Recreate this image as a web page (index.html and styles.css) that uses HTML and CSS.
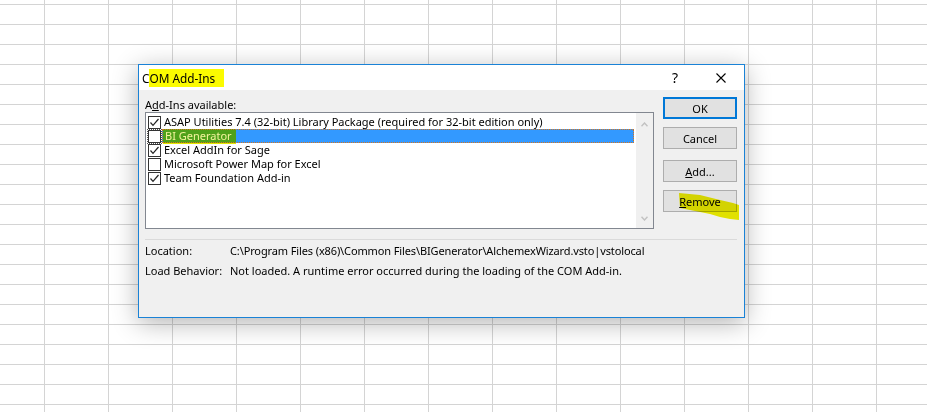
FILE: index.html
```html
<!DOCTYPE html>
<html>
<head>
<meta charset="utf-8">
<title>COM Add-Ins</title>
<link rel="stylesheet" href="styles.css">
</head>
<body>
<div class="dialog">
  <div class="titlebar">
    <span class="title">C<span class="hl">OM Add-Ins</span></span>
    <div class="tb-btns">
      <span class="tbtn help">?</span>
      <span class="tbtn close"><svg width="10" height="10" viewBox="0 0 10 10"><path d="M0.5 0.5 L9.5 9.5 M9.5 0.5 L0.5 9.5" stroke="#000" stroke-width="1.1" fill="none"/></svg></span>
    </div>
  </div>
  <div class="content">
    <div class="main">
      <div class="left">
        <div class="lbl">A<u>d</u>d-Ins available:</div>
        <div class="listbox">
          <ul class="items">
            <li class="item"><span class="cb"><svg width="11" height="11" viewBox="0 0 11 11"><polyline points="1.5,5.5 4,8.3 9.5,2" fill="none" stroke="#222" stroke-width="1.2"/></svg></span><span class="txt">ASAP Utilities 7.4 (32-bit) Library Package (required for 32-bit edition only)</span></li>
            <li class="item sel"><span class="cb focus"></span><span class="txt"><span class="hl2">BI Generator</span></span></li>
            <li class="item"><span class="cb"><svg width="11" height="11" viewBox="0 0 11 11"><polyline points="1.5,5.5 4,8.3 9.5,2" fill="none" stroke="#222" stroke-width="1.2"/></svg></span><span class="txt">Excel AddIn for Sage</span></li>
            <li class="item"><span class="cb"></span><span class="txt">Microsoft Power Map for Excel</span></li>
            <li class="item"><span class="cb"><svg width="11" height="11" viewBox="0 0 11 11"><polyline points="1.5,5.5 4,8.3 9.5,2" fill="none" stroke="#222" stroke-width="1.2"/></svg></span><span class="txt">Team Foundation Add-in</span></li>
          </ul>
          <div class="sb">
            <svg width="7" height="5" viewBox="0 0 7 5"><polyline points="0.5,4.3 3.5,1 6.5,4.3" fill="none" stroke="#c2c2c2" stroke-width="1.4"/></svg>
            <svg width="7" height="5" viewBox="0 0 7 5"><polyline points="0.5,0.7 3.5,4 6.5,0.7" fill="none" stroke="#c2c2c2" stroke-width="1.4"/></svg>
          </div>
        </div>
      </div>
      <div class="buttons">
        <div class="btn ok">OK</div>
        <div class="btn cancel">Cancel</div>
        <div class="btn add"><u>A</u>dd...</div>
        <div class="btn remove"><u>R</u>emove</div>
      </div>
    </div>
    <div class="sep"></div>
    <div class="info">
      <span>Location:</span><span class="path">C:\Program Files (x86)\Common Files\BIGenerator\AlchemexWizard.vsto|vstolocal</span>
      <span>Load Behavior:</span><span>Not loaded. A runtime error occurred during the loading of the COM Add-in.</span>
    </div>
  </div>
  <svg class="scribble" width="60" height="28" viewBox="0 0 60 28"><polygon points="0,0 21,2 41,7 54,10 60,12 60,27 51,26 41,24 31,21 21,19 1,15" fill="#f0f000"/></svg>
</div>
</body>
</html>
```

FILE: styles.css
```css
* { box-sizing: border-box; }

body {
  margin: 0;
  width: 927px;
  height: 412px;
  overflow: hidden;
  position: relative;
  background-color: #fff;
  background-image:
    linear-gradient(to right, #d4d4d4 1px, transparent 1px),
    linear-gradient(to bottom, #d4d4d4 1px, transparent 1px);
  background-size: 64px 20px;
  background-position: 44px 4px;
  font-family: "Noto Sans", "DejaVu Sans", sans-serif;
  font-size: 11px;
  color: #000;
}

.dialog {
  position: absolute;
  left: 138px;
  top: 64px;
  width: 607px;
  height: 254px;
  border: 1px solid #1a82d6;
  background: #f0f0f0;
  box-shadow: 0 5px 24px rgba(0, 0, 0, 0.3);
  display: flex;
  flex-direction: column;
}

.titlebar {
  flex: none;
  height: 25px;
  background: #fff;
  display: flex;
  align-items: center;
  padding-left: 3px;
}

.title {
  font-size: 11.8px;
  line-height: 18px;
  display: flex;
}

.title .hl {
  background: #fbfb00;
  padding-right: 9px;
}

.tb-btns {
  margin-left: auto;
  display: flex;
}

.tbtn {
  width: 46px;
  height: 25px;
  display: flex;
  align-items: center;
  justify-content: center;
}

.help {
  font-size: 14px;
  line-height: 1;
}

.content {
  flex: 1;
  padding: 7px 7px 0 6px;
}

.main {
  display: flex;
  gap: 9px;
}

.left {
  width: 509px;
}

.lbl {
  height: 15px;
  line-height: 15px;
}

.listbox {
  height: 117px;
  border: 1px solid #828790;
  background: #fff;
  display: flex;
}

.items {
  flex: 1;
  list-style: none;
  margin: 0;
  padding: 2px 2px 0 2px;
}

.item {
  height: 14px;
  display: flex;
  align-items: center;
}

.cb {
  flex: none;
  width: 13px;
  height: 13px;
  border: 1px solid #333;
  margin-right: 1px;
  display: flex;
}

.cb.focus {
  outline: 1px dotted #555;
  outline-offset: 0;
}

.txt {
  flex: 1;
  height: 14px;
  line-height: 14px;
  padding-left: 2px;
  white-space: nowrap;
}

.sel .txt {
  background: #3399ff;
  outline: 1px dotted #d8741a;
  outline-offset: -1px;
  padding-left: 1px;
}

.hl2 {
  display: inline-block;
  height: 14px;
  padding: 0 4px 0 2px;
  background: #4fa11a;
  color: #f3f39c;
  box-shadow: 0 1px 0 #e6e600;
}

.sb {
  flex: none;
  width: 17px;
  background: #f0f0f0;
  display: flex;
  flex-direction: column;
  justify-content: space-between;
  align-items: center;
  padding: 9px 0 7px;
}

.sb svg { display: block; }

.buttons {
  width: 74px;
  display: flex;
  flex-direction: column;
}

.btn {
  height: 22px;
  border: 1px solid #adadad;
  background: #e1e1e1;
  display: flex;
  align-items: center;
  justify-content: center;
  line-height: 1;
}

.btn.ok { border: 2px solid #0078d7; }
.btn.cancel { margin-top: 8px; }
.btn.add { margin-top: 11px; }
.btn.remove { margin-top: 8px; }

.sep {
  height: 1px;
  background: #dadada;
  margin-top: 10px;
}

.info {
  display: grid;
  grid-template-columns: 85px 1fr;
  margin-top: 1px;
  line-height: 20px;
}

.path {
  letter-spacing: -0.12px;
}

.scribble {
  position: absolute;
  left: 540px;
  top: 128px;
  mix-blend-mode: multiply;
}
```
